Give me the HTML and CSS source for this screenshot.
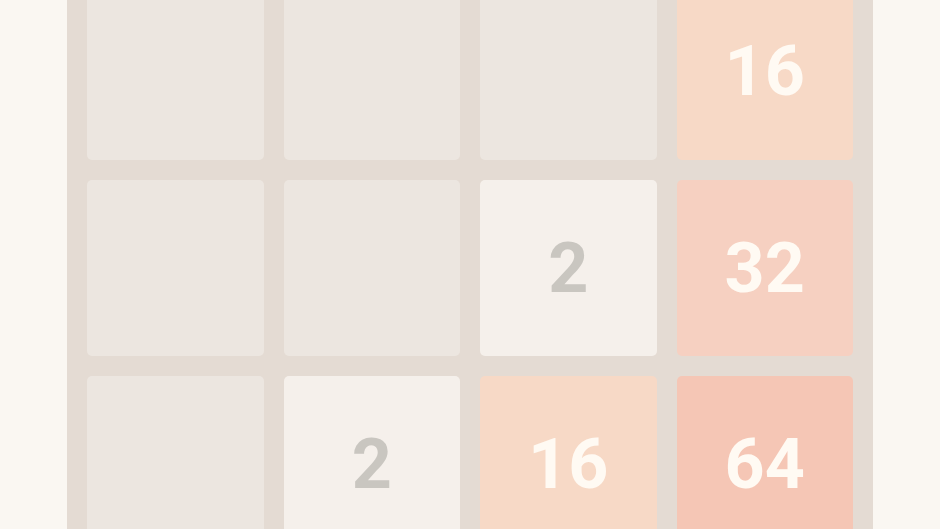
FILE: index.html
```html
<!DOCTYPE html>
<html lang="en">

<head>
    <meta charset="UTF-8">
    <meta name="viewport" content="width=device-width, initial-scale=1.0">
    <title>2048</title>
    <link rel="stylesheet" href="styles.css">
</head>

<body>
    <div class="game">
        <div class="board">
            <div class="tile"></div>
            <div class="tile"></div>
            <div class="tile"></div>
            <div class="tile tile-16">16</div>

            <div class="tile"></div>
            <div class="tile"></div>
            <div class="tile tile-2">2</div>
            <div class="tile tile-32">32</div>

            <div class="tile"></div>
            <div class="tile tile-2">2</div>
            <div class="tile tile-16">16</div>
            <div class="tile tile-64">64</div>

            <div class="tile"></div>
            <div class="tile"></div>
            <div class="tile"></div>
            <div class="tile"></div>
        </div>
    </div>
</body>

</html>
```

FILE: styles.css
```css
body {
    margin: 0;
    background-color: #faf7f2;
    font-family: Roboto, "Open Sans", sans-serif;
    overflow: hidden;
}

.game {
    display: flex;
    justify-content: center;
}

.board {
    margin-top: -37px;
    width: 806px;
    box-sizing: border-box;
    padding: 20px;
    display: grid;
    grid-template-columns: repeat(4, 1fr);
    grid-auto-rows: 176.5px;
    gap: 20px;
    background: #e4dbd3;
    border-radius: 8px;
}

.tile {
    display: flex;
    justify-content: center;
    align-items: center;
    border-radius: 5px;
    background: #ece6e0;
    font-size: 70px;
    font-weight: 700;
    color: #fffaf3;
}

.tile-2 {
    background: #f5f0eb;
    color: #c9c6c0;
}

.tile-16 {
    background: #f7d9c6;
}

.tile-32 {
    background: #f6d0c1;
}

.tile-64 {
    background: #f5c6b5;
}
```
